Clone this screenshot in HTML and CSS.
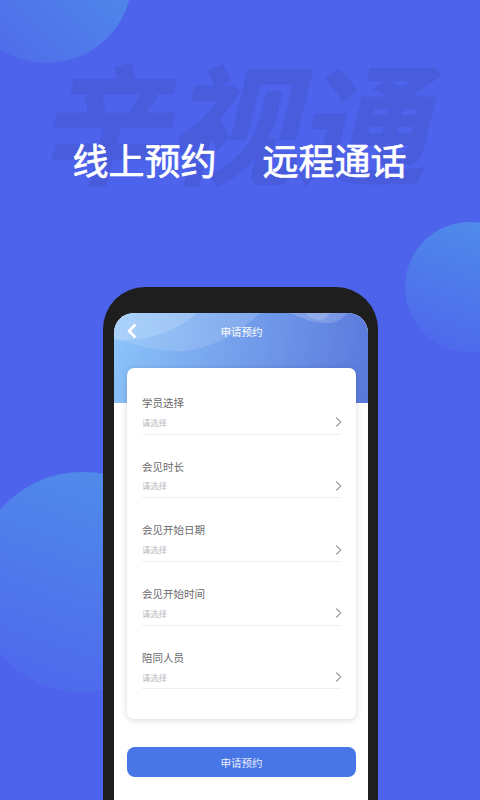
FILE: index.html
```html
<!DOCTYPE html>
<html lang="zh-CN">
<head>
<meta charset="utf-8">
<title>申请预约</title>
<link rel="stylesheet" href="styles.css">
</head>
<body>
<main class="page">
  <div class="blob blob-top"></div>
  <div class="blob blob-right"></div>
  <div class="blob blob-left"></div>
  <div class="watermark">辛视通</div>
  <h1 class="headline"><span>线上预约</span><span>远程通话</span></h1>
  <section class="phone">
    <div class="screen">
      <header class="hero">
        <svg class="wave" viewBox="0 0 254 90" preserveAspectRatio="none" aria-hidden="true">
          <path class="wave-a" d="M0 0H146C125 20 95 38 63 38C45 38 20 32 0 25Z"/>
          <path class="wave-b" d="M0 0H83C70 12 50 22 30 25C18 27 8 27 0 27Z"/>
          <path class="wave-b" d="M176 0H234C226 8 220 10 213 10C200 10 188 6 176 0Z"/>
          <path class="wave-b" d="M191 0H216C212 6 208 8 203 7C198 6 194 3 191 0Z"/>
        </svg>
        <div class="nav">
          <svg class="back" viewBox="0 0 10 16" aria-hidden="true"><path d="M8.5 1.5L2 8L8.5 14.5"/></svg>
          <span class="nav-title">申请预约</span>
        </div>
      </header>
      <div class="content">
        <div class="card">
          <div class="field"><div class="label">学员选择</div><div class="row"><span>请选择</span><svg class="chev" viewBox="0 0 8 12" aria-hidden="true"><path d="M1.5 1L6.5 6L1.5 11"/></svg></div></div>
          <div class="field"><div class="label">会见时长</div><div class="row"><span>请选择</span><svg class="chev" viewBox="0 0 8 12" aria-hidden="true"><path d="M1.5 1L6.5 6L1.5 11"/></svg></div></div>
          <div class="field"><div class="label">会见开始日期</div><div class="row"><span>请选择</span><svg class="chev" viewBox="0 0 8 12" aria-hidden="true"><path d="M1.5 1L6.5 6L1.5 11"/></svg></div></div>
          <div class="field"><div class="label">会见开始时间</div><div class="row"><span>请选择</span><svg class="chev" viewBox="0 0 8 12" aria-hidden="true"><path d="M1.5 1L6.5 6L1.5 11"/></svg></div></div>
          <div class="field"><div class="label">陪同人员</div><div class="row"><span>请选择</span><svg class="chev" viewBox="0 0 8 12" aria-hidden="true"><path d="M1.5 1L6.5 6L1.5 11"/></svg></div></div>
        </div>
        <button class="submit" type="button">申请预约</button>
      </div>
    </div>
  </section>
</main>
</body>
</html>
```
FILE: styles.css
```css
* { box-sizing: border-box; }
html, body { margin: 0; padding: 0; }
body { font-family: "Noto Sans CJK SC", "Noto Sans", sans-serif; }
.page {
  position: relative;
  width: 480px;
  height: 800px;
  overflow: hidden;
  background: #4e63ec;
  padding-top: 135px;
}
.blob {
  position: absolute;
  border-radius: 50%;
  background: linear-gradient(200deg, #4f90ea 0%, #4e6bec 85%);
}
.blob-top { left: -38px; top: -107px; width: 170px; height: 170px; background: linear-gradient(45deg, #4f6bea 10%, #4f90ea 90%); }
.blob-right { left: 405px; top: 222px; width: 130px; height: 130px; }
.blob-left { left: -27px; top: 472px; width: 220px; height: 220px; }
.watermark {
  position: absolute;
  left: 50px;
  top: 28px;
  font-size: 130px;
  line-height: 180px;
  font-weight: 700;
  color: #485cdc;
  -webkit-text-stroke: 1px #485cdc;
  white-space: nowrap;
  transform: skewX(-14deg);
}
.headline {
  position: relative;
  margin: 0;
  display: flex;
  justify-content: center;
  gap: 46px;
  padding-right: 1px;
  font-size: 36px;
  line-height: 48px;
  font-weight: 400;
  -webkit-text-stroke: 0.7px #fff;
  color: #fff;
}
.phone {
  position: relative;
  width: 275px;
  height: 560px;
  margin: 104px 0 0 103px;
  padding: 26px 10px 0 11px;
  background: #1e1e1e;
  border-radius: 42px 42px 0 0;
}
.screen {
  height: 100%;
  background: #fff;
  border-radius: 20px 20px 0 0;
  overflow: hidden;
}
.hero {
  position: relative;
  height: 90px;
  background: linear-gradient(100deg, #8cc4fa 0%, #5a78dc 100%);
}
.wave { position: absolute; inset: 0; width: 100%; height: 100%; }
.wave-a { fill: rgba(255,255,255,.13); }
.wave-b { fill: rgba(255,255,255,.16); }
.nav {
  position: relative;
  height: 37px;
  display: flex;
  align-items: center;
  justify-content: center;
  padding-left: 1px;
}
.back {
  position: absolute;
  left: 13px;
  top: 10px;
  width: 10px;
  height: 16px;
  fill: none;
  stroke: #fff;
  stroke-width: 2.6;
}
.nav-title { font-size: 10.5px; color: #fff; }
.content { padding: 0 12px 0 13px; }
.card {
  height: 351px;
  margin-top: -35px;
  position: relative;
  background: #fff;
  border-radius: 7px;
  box-shadow: 0 1px 6px rgba(0,0,0,.16);
  padding: 25px 15px 0;
}
.field { height: 63.7px; }
.label { font-size: 10.5px; line-height: 20px; color: #6a6a6a; }
.row {
  height: 21.5px;
  padding-bottom: 3px;
  display: flex;
  align-items: center;
  justify-content: space-between;
  border-bottom: 1.5px solid #f0f0f0;
  font-size: 8.3px;
  color: #b8b8b8;
}
.chev { width: 7px; height: 12px; margin: 1px -1px 0 0; fill: none; stroke: #888; stroke-width: 1.2; }
.submit {
  display: block;
  width: 100%;
  height: 30px;
  margin-top: 28px;
  border: 0;
  border-radius: 8px;
  background: #4876e6;
  color: #e8eefc;
  font: inherit;
  font-size: 10.5px;
}
```
